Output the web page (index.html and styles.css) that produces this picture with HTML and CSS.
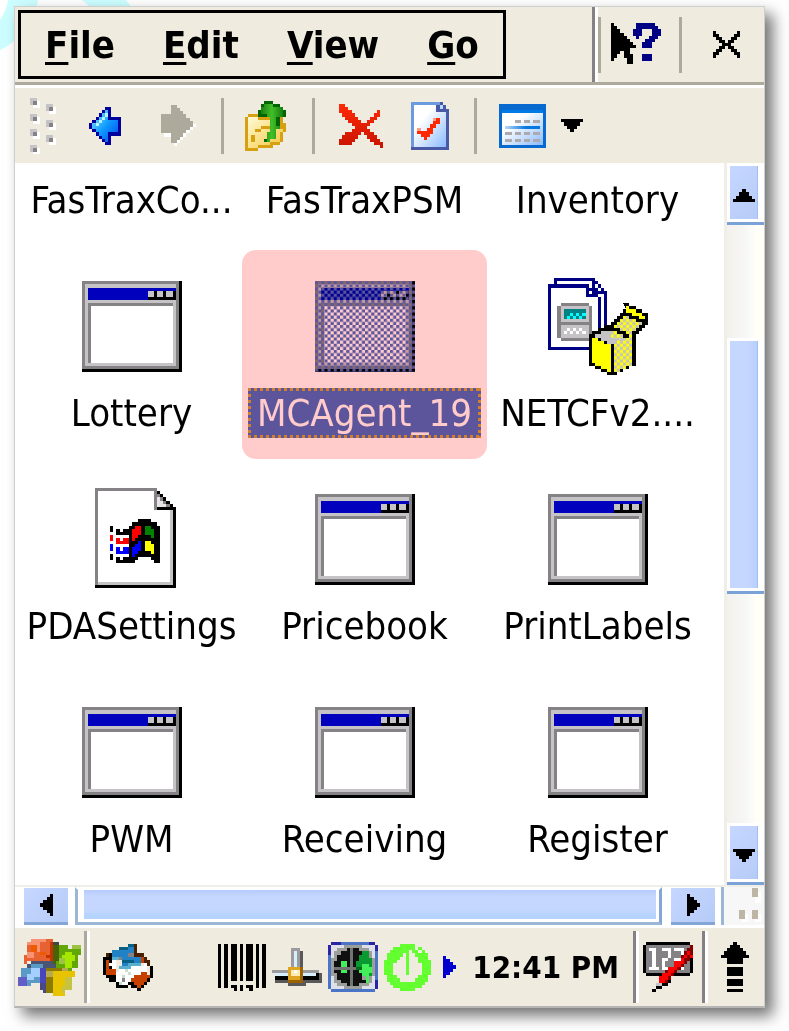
FILE: index.html
```
<!DOCTYPE html>
<html lang="en">
<head>
    <meta charset="UTF-8">
    <meta name="viewport" content="width=device-width, initial-scale=1.0">
    <title>File Explorer</title>
    <link rel="stylesheet" href="styles.css">
</head>
<body>
    <!-- shared icon drawings -->
    <svg class="defs" width="0" height="0" aria-hidden="true">
        <defs>
            <linearGradient id="folder-fill" x1="0" y1="0" x2="1" y2="1">
                <stop offset="0" stop-color="#fffbd8"/>
                <stop offset="1" stop-color="#f5c63c"/>
            </linearGradient>
            <linearGradient id="green-fill" x1="0" y1="0" x2="1" y2="0">
                <stop offset="0" stop-color="#0a6b0a"/>
                <stop offset=".5" stop-color="#42c028"/>
                <stop offset="1" stop-color="#0c6c0c"/>
            </linearGradient>
            <linearGradient id="blue-fill" x1="0" y1="0" x2="1" y2="1">
                <stop offset="0" stop-color="#8fe8ff"/>
                <stop offset=".5" stop-color="#109cff"/>
                <stop offset="1" stop-color="#0048f0"/>
            </linearGradient>
            <linearGradient id="page-fill" x1="0" y1="0" x2="1" y2="1">
                <stop offset=".3" stop-color="#ffffff"/>
                <stop offset="1" stop-color="#8cbcff"/>
            </linearGradient>
            <linearGradient id="red-fill" x1="0" y1="0" x2="0" y2="1">
                <stop offset="0" stop-color="#ff2a08"/>
                <stop offset="1" stop-color="#c81400"/>
            </linearGradient>
            <linearGradient id="line-fill" x1="0" y1="0" x2="1" y2="0">
                <stop offset="0" stop-color="#b4d8f8"/>
                <stop offset=".6" stop-color="#0878e0"/>
            </linearGradient>
            <pattern id="dither-blue" width="2" height="2" patternUnits="userSpaceOnUse">
                <path fill="#5c6bc3" d="M0 0h1v1H0zM1 1h1v1H1z"/>
            </pattern>
            <pattern id="dither-gray" width="2" height="2" patternUnits="userSpaceOnUse">
                <path fill="#c6c3c6" d="M0 0h1v1H0zM1 1h1v1H1z"/>
            </pattern>
            <symbol id="window" viewBox="0 0 32 32">
                <path fill="#000" d="M0 2h32v29H0z"/>
                <path fill="#848284" d="M0 2h31v28H0z"/>
                <path fill="#c6c3c6" d="M1 3h29v26H1z"/>
                <path fill="#0000bd" d="M2 4h28v4H2z"/>
                <path fill="#000" d="M21 5h9v3h-9z"/>
                <path fill="#c6c3c6" d="M21 5h2v2h-2zM24 5h2v2h-2zM27 5h2v2h-2z"/>
                <path fill="#848284" d="M2 9h27v1H3v18H2z"/>
                <path fill="#fff" d="M3 10h26v18H3z"/>
            </symbol>
        </defs>
    </svg>

    <svg class="backdrop" width="140" height="60" viewBox="0 0 140 60" aria-hidden="true">
        <path fill="#cdfeff" d="M8 0h30C36 16 22 40 0 50V20C4 14 7 7 8 0zM82 0h44l8 10H94z"/>
    </svg>

    <main class="device">
        <header class="menubar">
            <nav class="menus">
                <button><u>F</u>ile</button>
                <button><u>E</u>dit</button>
                <button><u>V</u>iew</button>
                <button><u>G</u>o</button>
            </nav>
            <div class="window-buttons">
                <span class="rule"></span>
                <button class="help" aria-label="Help">
                    <svg class="icon" width="50" height="50" viewBox="0 0 16 16">
                        <path fill="#000" d="M0 1h1v1h1v1h1v1h1v1h1v1h1v1h1v1h1v1H6v2h1v3H5v-2H4v-2H3v1H2v1H1v1H0z"/>
                        <path fill="#000084" d="M8 1h6v1h1v1h1v2h-1v1h-1v1h-1v2h-3V7h1V6h1V5h1V3h-3v2h-1v1H8V5H7V3h1zM10 11h3v2h-3z"/>
                    </svg>
                </button>
                <span class="rule"></span>
                <button class="close" aria-label="Close">
                    <svg class="icon" width="27" height="27" viewBox="0 0 9 9">
                        <path fill="#000" d="M0 0h1v1h1v1h1v1h1v1h1V3h1V2h1V1h1V0h1v2H8v1H7v1H6v1h1v1h1v1h1v2H8V8H7V7H6V6H5V5H4v1H3v1H2v1H1v1H0V7h1V6h1V5h1V4H2V3H1V2H0z"/>
                    </svg>
                </button>
            </div>
        </header>

        <section class="toolbar">
            <svg class="icon grip" width="26" height="56" viewBox="0 0 26 56">
                <path fill="#fff" d="M3 3h7v7H3zM3 19h7v7H3zM3 34h7v7H3zM3 50h7v6H3zM19 9h7v7h-7zM19 25h7v7h-7zM19 40h7v7h-7z"/>
                <path fill="#c6c3c6" d="M0 0h7v7H0zM0 16h7v7H0zM0 31h7v7H0zM0 47h7v7H0zM16 6h7v7h-7zM16 22h7v7h-7zM16 37h7v7h-7z"/>
                <path fill="#848284" d="M3 3h4v4H3zM3 19h4v4H3zM3 34h4v4H3zM3 50h4v4H3zM19 9h4v4h-4zM19 25h4v4h-4zM19 40h4v4h-4z"/>
            </svg>
            <button class="back" aria-label="Back">
                <svg class="icon" width="32" height="38" viewBox="0 0 10 12">
                    <path fill="#00009c" d="M5 0h2v3h3v6H7v3H5v-1H4v-1H3V9H2V8H1V7H0V5h1V4h1V3h1V2h1V1h1z"/>
                    <path fill="url(#blue-fill)" d="M5 1h1v3h3v4H6v3H5v-1H4V9H3V8H2V7H1V5h1V4h1V3h1V2h1z"/>
                    <path fill="#b5f3ff" d="M5 2h1v1H5v1H4v1H3v1H2V5h1V4h1V3h1z"/>
                </svg>
            </button>
            <button class="forward" aria-label="Forward" disabled>
                <svg class="icon" width="35" height="41" viewBox="0 0 11 13">
                    <path fill="#fff" d="M4 1h2v1h1v1h1v1h1v1h1v1h1v1h-1v1H9v1H8v1H7v1H6v1H5v1H4v-3H1V9h3z"/>
                    <path fill="#adaa9c" d="M3 0h2v1h1v1h1v1h1v1h1v1h1v2H9v1H8v1H7v1H6v1H5v1H3V9H0V3h3z"/>
                </svg>
            </button>
            <span class="rule"></span>
            <button class="up" aria-label="Up">
                <svg class="icon" width="41" height="50" viewBox="0 0 13 16">
                    <path fill="#d6a010" d="M0 5h1V4h3v1h8v2h1v3h-1v3h-1v1H9v1H4v1H0z"/>
                    <path fill="url(#folder-fill)" d="M1 5h3v1h5v2H5v1H3v2H2v4H1zM3 10h2V9h7v1h-1v3H8v1H4v1H2v-2h1z"/>
                    <path fill="url(#green-fill)" d="M6 0h3v1h2v1h1v1h1v2h-2v4h-1v3H8v1H6v-1h1v-2h1V5H4V3h1V1h1z"/>
                    <path fill="#006500" d="M6 0h3v1H6zM5 1h1v1H5zM4 3h1v2H4zM5 4h2v1H5zM12 3h1v2h-1zM10 5h1v3h-1zM6 12h1v1H6zM9 1h2v1H9z"/>
                </svg>
            </button>
            <span class="rule"></span>
            <button class="delete" aria-label="Delete">
                <svg class="icon" width="44" height="44" viewBox="0 0 14 14">
                    <path fill="url(#red-fill)" d="M0 0h2v1h1v1h1v1h1v1h1v1h1v1h2V5h1V4h1V3h1V2h1v2h-1v1h-1v1h-1v1H9v1h1v1h1v1h1v1h1v1h1v2h-1v-1h-2v-1h-1v-1H9v-1H8V9H7v1H6v1H5v1H4v1H0v-2h1v-1h1V9h2V8h1V7H4V6H3V5H2V4H1V3H0z"/>
                </svg>
            </button>
            <button class="properties" aria-label="Properties">
                <svg class="icon" width="38" height="48" viewBox="0 0 12 15">
                    <path fill="#4a59a5" d="M0 0h10v1h1v1h1v13H0z"/>
                    <path fill="#6b9ade" d="M0 0h9v1H1v13H0z"/>
                    <path fill="url(#page-fill)" d="M1 1h7v2h3v11H1z"/>
                    <path fill="#b5dbff" d="M9 1h1v1H9z"/>
                    <path fill="#ff2800" d="M8 5h1v2H8v1H7v2H6v1H5v1H4v-1H3v-1H2V8h1v1h2V8h1V7h1V6h1z"/>
                    <path fill="#ff9a84" d="M2 8h1v1H2zM7 5h1v1H7z"/>
                </svg>
            </button>
            <span class="rule"></span>
            <button class="view" aria-label="View">
                <svg class="icon" width="47" height="44" viewBox="0 0 15 14">
                    <path fill="#0869ce" d="M0 0h15v14H0z"/>
                    <path fill="#007be7" d="M1 2h13v1H1z"/>
                    <path fill="url(#page-fill)" d="M1 3h13v10H1z"/>
                    <path fill="#adaaad" d="M5 5h2v1H5zM8 5h2v1H8zM11 5h2v1h-2zM2 9h2v1H2zM5 9h2v1H5zM8 9h2v1H8zM11 9h2v1h-2zM2 11h2v1H2zM5 11h2v1H5zM8 11h2v1H8zM11 11h2v1h-2z"/>
                    <path fill="url(#line-fill)" d="M2 7h11v1H2z"/>
                </svg>
                <svg class="icon" width="22" height="13" viewBox="0 0 7 4">
                    <path fill="#000" d="M0 0h7v1H6v1H5v1H4v1H3V3H2V2H1V1H0z"/>
                </svg>
            </button>
        </section>

        <section class="view-area">
            <ul class="files">
                <li class="file"><span>FasTraxCo...</span></li>
                <li class="file"><span>FasTraxPSM</span></li>
                <li class="file"><span>Inventory</span></li>
                <li class="file">
                    <svg class="icon" width="100" height="100"><use href="#window"/></svg>
                    <span>Lottery</span>
                </li>
                <li class="file selected">
                    <svg class="icon" width="100" height="100" viewBox="0 0 32 32">
                        <use href="#window"/>
                        <path fill="url(#dither-blue)" d="M0 2h32v29H0z"/>
                    </svg>
                    <span>MCAgent_19</span>
                </li>
                <li class="file">
                    <svg class="icon" width="100" height="100" viewBox="0 0 32 32">
                        <path fill="#000084" d="M2 1h13v1h1v1h1v1h1v1h1v14H2z"/>
                        <path fill="#fff" d="M3 2h11v3h1v1h3v12H3zM15 3h1v1h-1zM16 4h1v1h-1z"/>
                        <path fill="#000084" d="M0 3h13v1h1v1h1v1h1v1h1v17H0z"/>
                        <path fill="#fff" d="M1 4h11v3h4v16H1zM13 5h1v1h-1z"/>
                        <path fill="#848284" d="M4 9h9v1h1v10h-1v1H4v-1H3V10h1z"/>
                        <path fill="#c6c3c6" d="M4 10h9v5H4zM4 16h9v4H4z"/>
                        <path fill="#008284" d="M5 11h7v3H5z"/>
                        <path fill="#0ff" d="M7 12h1v1H7zM9 12h1v1H9zM11 12h1v1h-1zM6 13h1v1H6zM8 13h1v1H8zM10 13h1v1h-1z"/>
                        <path fill="#fff" d="M6 17h1v1H6zM8 17h1v1H8zM10 17h1v1h-1zM5 18h1v1H5zM7 18h1v1H7zM9 18h1v1H9zM11 18h1v1h-1z"/>
                        <path fill="#000" d="M24 9h2v1h2v1h2v1h2v4h-1v1h-1v1h-1v1h-1v10h-2v1h-2v1h-2v1h-3v-1h-2v-1h-2v-1h-2V19h1v-1h2v-1h2v-1h2v-1h1v-1h1v-1h1v-1h1v-1h1z"/>
                        <path fill="#ff0" d="M14 20h2v1h2v1h2v9h-1v-1h-2v-1h-2v-1h-1zM25 10h1v1h2v1h2v1h1v1h-2v-1h-2v-1h-2z"/>
                        <path fill="#c6c3c6" d="M15 19h2v-1h3v1h2v1h2v1h-2v1h-3v-1h-2v-1h-2z"/>
                        <path fill="#ff0" d="M21 22h1v-1h2v-1h2v-1h1v10h-2v1h-2v1h-2zM21 16h1v-1h1v-1h1v-1h2v1h2v1h2v1h-1v1h-1v1h-1v1h-2v-1h-2v-1h-2zM20 18h2v1h2v1h-1v1h-1v-1h-2z"/>
                        <path fill="url(#dither-gray)" d="M21 22h1v-1h2v-1h2v-1h1v10h-2v1h-2v1h-2zM21 16h1v-1h1v-1h1v-1h2v1h2v1h2v1h-1v1h-1v1h-1v1h-2v-1h-2v-1h-2zM20 18h2v1h2v1h-1v1h-1v-1h-2z"/>
                    </svg>
                    <span>NETCFv2....</span>
                </li>
                <li class="file">
                    <svg class="icon" width="100" height="100" viewBox="0 0 32 32">
                        <path fill="#000" d="M4 0h20v1h1v1h1v1h1v1h1v1h1v1h1v26H4z"/>
                        <path fill="#848284" d="M4 0h20v7h-1V1H5v30H4z"/>
                        <path fill="#fff" d="M5 1h18v6h5v23H5z"/>
                        <path fill="#c6c3c6" d="M5 30h23V7h1v24H5z"/>
                        <path fill="#848284" d="M23 1h1v6h-1zM24 2h1v1h-1zM25 3h1v1h-1zM26 4h1v1h-1zM27 5h1v1h-1z"/>
                        <path fill="#e7e3e7" d="M24 3h1v1h1v1h1v1h-3z"/>
                        <path fill="#000" d="M9 12h1v2H9zM9 21h1v2H9zM11 13h1v1h1v-1h2v2h-4zM11 22h1v1h1v-1h3v2h-5z"/>
                        <path fill="red" d="M9 15h1v2H9zM11 16h1v1h1v-1h2v2h-4z"/>
                        <path fill="#00f" d="M9 18h1v2H9zM11 19h1v1h1v-1h2v2h-4z"/>
                        <path fill="#000" d="M18 10h4v1h2v1h1v12h-2v-1h-1v-1h-4v1h-1v1h-2V12h1v-1h2z"/>
                        <path fill="red" d="M17 12h2v3h-1v1h-1v1h-1v-4h1z"/>
                        <path fill="#008200" d="M20 12h2v1h1v3h-1v-1h-2z"/>
                        <path fill="#00f" d="M17 18h1v-1h1v3h-1v1h-1v1h-1v-3h1z"/>
                        <path fill="#ff0" d="M20 17h2v1h1v3h-1v-1h-2z"/>
                    </svg>
                    <span>PDASettings</span>
                </li>
                <li class="file">
                    <svg class="icon" width="100" height="100"><use href="#window"/></svg>
                    <span>Pricebook</span>
                </li>
                <li class="file">
                    <svg class="icon" width="100" height="100"><use href="#window"/></svg>
                    <span>PrintLabels</span>
                </li>
                <li class="file">
                    <svg class="icon" width="100" height="100"><use href="#window"/></svg>
                    <span>PWM</span>
                </li>
                <li class="file">
                    <svg class="icon" width="100" height="100"><use href="#window"/></svg>
                    <span>Receiving</span>
                </li>
                <li class="file">
                    <svg class="icon" width="100" height="100"><use href="#window"/></svg>
                    <span>Register</span>
                </li>
            </ul>
            <div class="scroll-y">
                <button class="scroll-button" aria-label="Scroll up">
                    <svg class="icon" width="22" height="13" viewBox="0 0 7 4">
                        <path fill="#000" d="M3 0h1v1h1v1h1v1h1v1H0V3h1V2h1V1h1z"/>
                    </svg>
                </button>
                <div class="space-before"></div>
                <div class="thumb"></div>
                <div class="space-after"></div>
                <button class="scroll-button" aria-label="Scroll down">
                    <svg class="icon" width="22" height="13" viewBox="0 0 7 4">
                        <path fill="#000" d="M0 0h7v1H6v1H5v1H4v1H3V3H2V2H1V1H0z"/>
                    </svg>
                </button>
            </div>
        </section>

        <div class="scroll-x">
            <button class="scroll-button" aria-label="Scroll left">
                <svg class="icon" width="13" height="22" viewBox="0 0 4 7">
                    <path fill="#000" d="M4 0v7H3V6H2V5H1V4H0V3h1V2h1V1h1V0z"/>
                </svg>
            </button>
            <div class="thumb"></div>
            <button class="scroll-button" aria-label="Scroll right">
                <svg class="icon" width="13" height="22" viewBox="0 0 4 7">
                    <path fill="#000" d="M0 0v7h1V6h1V5h1V4h1V3H3V2H2V1H1V0z"/>
                </svg>
            </button>
            <div class="corner">
                <svg class="icon" width="22" height="34" viewBox="0 0 22 34">
                    <path fill="#fff" d="M16 4h6v11h-6zM3 26h6v8H3zM16 26h6v8h-6z"/>
                    <path fill="#bdb6a5" d="M13 0h6v9h-6zM0 22h6v9H0zM13 22h6v9h-6z"/>
                </svg>
            </div>
        </div>

        <footer class="taskbar">
            <button class="start" aria-label="Start">
                <svg class="icon" width="63" height="57" viewBox="0 0 20 18">
                    <path fill="#e76131" d="M4 0h7v7H9V6H5v1H3v1H2V5h1V1h1z"/>
                    <path fill="#f79273" d="M4 0h5v1H7v3H5V2H3V1h1zM3 4h2v2H3z"/>
                    <path fill="#ef5900" d="M4 2h2v2H4zM7 4h2v2H7z"/>
                    <path fill="#e76131" d="M5 5h4v2H5z"/>
                    <path fill="#c63400" d="M10 1h1v6h-1zM9 5h1v1H9z"/>
                    <path fill="#424542" d="M11 1h2v1h-2z"/>
                    <path fill="#4a5573" d="M4 7h7v1h1v1H3V8h1z"/>
                    <path fill="#4a6108" d="M11 2h2v6h-2z"/>
                    <path fill="#63a608" d="M13 2h3v1h1V2h3v3h-1v4h-2v1h-5V7h1z"/>
                    <path fill="#a5e700" d="M15 4h2v1h1v2h-1v2h-2V7h-1V5h1z"/>
                    <path fill="#9cc342" d="M17 2h3v1h-3zM13 6h2v2h-2z"/>
                    <path fill="#5a9ac6" d="M1 9h3V8h4v6H4v1H1v-3z"/>
                    <path fill="#a5cfff" d="M4 9h3v3H5v1H3v-2h1z"/>
                    <path fill="#635dc6" d="M0 12h3v3H0z"/>
                    <path fill="#4a45bd" d="M7 9h2v5H7z"/>
                    <path fill="#4a4984" d="M7 14h2v3H8v-1H7z"/>
                    <path fill="#8c7900" d="M9 9h5v1h-3v7H9z"/>
                    <path fill="#e7c300" d="M11 10h7v2h-1v4h-2v2h-4z"/>
                    <path fill="#c6c342" d="M15 12h2v4h-2v1h-1v-2h1z"/>
                    <path fill="#b5aa52" d="M9 10h2v2H9zM14 9h2v1h-2z"/>
                </svg>
            </button>
            <span class="groove tan"></span>
            <button class="sync" aria-label="Synchronize">
                <svg class="icon" width="50" height="47" viewBox="0 0 16 15">
                    <path fill="#000" d="M1 3h2v5h1v4H2v-1H1v-1H0V4h1zM4 10h1v4H4zM5 13h3v1H5zM8 12h2v1h1v1h2v-1h1v-1h1v-1h1V7h-1v4h-1v1h-1v1h-1v2h-1v-1H9v-1H8z"/>
                    <path fill="#c64100" d="M1 5h1v5H1zM2 8h2v2H2zM12 4h2v1h1v2h-1v3h1v1h-1v1h-1v1h-1v1h-1v-1h-1v-1H9v-1h1v-1h1V9h2V6h-1z"/>
                    <path fill="#fff" d="M5 7h8v2h-1v1h-2v1H9v1H8v1H5v-1H4V9h1zM13 5h1v4h-1zM3 4h1v4H3zM2 6h1v1H2z"/>
                    <path fill="#2182c6" d="M3 2h3V1h2V0h3v4h1v3H6V5H3z"/>
                    <path fill="#086184" d="M5 1h3v1H5zM8 0h2v1H8zM6 5h4v1H6z"/>
                    <path fill="#5aaece" d="M8 6h4v1H9v1H5V7h3zM3 4h2v1H3z"/>
                    <path fill="#c6dfce" d="M7 8h1v1H7zM8 9h1v1H8zM6 10h1v1H6zM5 12h1v1H5z"/>
                    <path fill="#4a2000" d="M10 0h1v3h2v1h1v1h1v2h-1V6h-1V4h-3zM1 3h1v1H1z"/>
                    <path fill="#848284" d="M5 4h1v1H5zM8 3h2v1H8zM6 11h1v1H6z"/>
                </svg>
            </button>
            <div class="tray">
                <svg class="icon barcode" width="48" height="47" viewBox="0 0 48 47">
                    <path fill="#000" d="M0 0h3v44H0zM6 0h4v44H6zM13 0h6v37h-6zM22 0h3v37h-3zM28 0h7v37h-7zM38 0h3v44h-3zM44 0h4v44h-4zM13 41h6v6h-3v-3h-3zM22 41h3v6h-3zM28 41h7v6h-4v-3h-3z"/>
                </svg>
                <svg class="icon network" width="50" height="38" viewBox="0 0 16 12">
                    <path fill="#5a595a" d="M8 1h2v6h5v1h1v3h-5v1H5v-1H1v-1h7z"/>
                    <path fill="#9c9a9c" d="M6 0h3v7h6v1H0V7h6z"/>
                    <path fill="#d6efff" d="M7 1h1v5H7zM1 8h13v1H1z"/>
                    <path fill="#000" d="M14 8h1v1h-1zM1 9h14v1H1z"/>
                    <path fill="#9c6100" d="M5 6h5v5H5z"/>
                    <path fill="#dea620" d="M5 6h4v4H5z"/>
                    <path fill="#ffebb5" d="M6 7h3v2H6z"/>
                    <path fill="#fff" d="M7 7h1v1H7z"/>
                </svg>
                <svg class="icon radar" width="50" height="50" viewBox="0 0 16 16">
                    <path fill="#4a75c6" d="M1 0h14v1h1v14h-1v1H1v-1H0V1h1z"/>
                    <path fill="#2924a5" d="M1 0h3v1H1zM0 1h1v3H0zM13 0h2v1h-2zM15 1h1v2h-1zM15 12h1v3h-1z"/>
                    <path fill="#dedfe7" d="M1 1h14v14H1z"/>
                    <path fill="#9c9e9c" d="M5 1h6v1h2v1h1v2h1v6h-1v2h-1v1h-2v1H5v-1H3v-1H2v-2H1V5h1V3h1V2h2z"/>
                    <path fill="#101010" d="M6 2h4v1h2v2h-1v1h-1v4h1v2h1v1h-2v1H6v-1H4v-1H3v-2H2V6h1V4h1V3h2z"/>
                    <path fill="#089a31" d="M10 4h1V3h2v2h1v6h-1v2h-1v-2h-1v-1h-1V9H8V8h1V6h1z"/>
                    <path fill="#42ef5a" d="M4 6h2v4H4zM11 7h2v1h1v2h-1v3h-1v-2h-1v-1h-1V9h1z"/>
                    <path fill="#737573" d="M7 2h1v12H7zM2 8h8v1H2z"/>
                    <path fill="#00691a" d="M9 8h2v1H9z"/>
                </svg>
                <svg class="icon power" width="47" height="47" viewBox="0 0 15 15">
                    <path fill="#63ff31" fill-rule="evenodd" d="M5 0h5v1h2v1h1v1h1v2h1v5h-1v2h-1v1h-1v1h-2v1H5v-1H3v-1H2v-1H1v-2H0V5h1V3h1V2h1V1h2zM6 3v1H5v1H4v1H3v4h1v1h1v1h5v-1h1v-1h1V6h-1V4H9V3z"/>
                    <path fill="#63ff31" d="M7 3h1v7H7z"/>
                    <path fill="#efebde" d="M8 2h1v1h1v1H9V3H8zM10 1h1v1h-1zM11 2h1v1h-1z"/>
                </svg>
                <svg class="icon more" width="13" height="22" viewBox="0 0 4 7">
                    <path fill="#0000ce" d="M0 0h1v1h1v1h1v1h1v1H3v1H2v1H1v1H0z"/>
                </svg>
                <time class="clock">12:41 PM</time>
            </div>
            <span class="groove"></span>
            <button class="keyboard" aria-label="Input panel">
                <svg class="icon" width="50" height="50" viewBox="0 0 16 16">
                    <path fill="#000" d="M1 0h14v1h1v9h-1v1H1v-1H0V1h1z"/>
                    <path fill="#848284" d="M1 1h14v9H1z"/>
                    <path fill="#fff" d="M2 2h2v6h1v1H2V8h1V3H2zM6 2h3v3H8v1H7v2h2v1H6V5h2V3H6zM10 2h3v7h-3V8h2V6h-2V5h2V3h-2z"/>
                    <path fill="#840000" d="M15 1h1v3h-1v2h-1v1h-1v1h-1v1h-1v1h-1v1H9v2H7v1H6v-1h1v-1H5v-1h1v-1h1V9h2V8h1V6h2V4h1V3h1V2h1z"/>
                    <path fill="red" d="M14 3h1v1h-1v1h-1v2h-1v1h-1v1h-1v1H9v1H8v1H7v1H5v-2h1v-1h2V8h2V6h2V5h1V4h1zM15 4h1v1h-1z"/>
                    <path fill="#c6c3c6" d="M4 13h2v1H4z"/>
                    <path fill="#000" d="M3 15h1v1H3zM4 14h2v1H4zM6 13h2v1H6zM8 12h1v1H8z"/>
                </svg>
            </button>
            <span class="groove"></span>
            <button class="desktop" aria-label="Switch window">
                <svg class="icon" width="28" height="50" viewBox="0 0 9 16">
                    <path fill="#000" d="M4 0h1v1h1v1h1v1h1v1h1v1H7v2H2V5H0V4h1V3h1V2h1V1h1zM2 8h5v3H2zM2 12h5v2H2zM2 15h5v1H2z"/>
                </svg>
            </button>
        </footer>
    </main>
</body>
</html>
```
FILE: styles.css
```
* {
    box-sizing: border-box;
}
body {
    margin: 0;
    background: white;
    color: black;
    font-family: "DejaVu Sans Condensed", "DejaVu Sans", sans-serif;
    font-size: 38px;
    line-height: 50px;
}
button {
    margin: 0;
    padding: 0;
    border: 0;
    background: none;
    color: inherit;
    font: inherit;
    cursor: pointer;
}
.defs,
.backdrop {
    position: absolute;
    top: 0;
    left: 0;
}
.icon {
    display: block;
    flex: none;
    shape-rendering: crispEdges;
}

/* device frame */
.device {
    position: relative;
    margin: 6px 24px 22px 14px;
    border: 1px solid #ced0d0;
    border-bottom: 2px solid #b5b5b5;
    background: #efebde;
    box-shadow: 8px 8px 14px rgba(0, 0, 0, 0.55);
}
.rule {
    width: 3px;
    height: 56px;
    background: #adaa9c;
}

/* menu bar */
.menubar {
    display: flex;
    border-bottom: 3px solid #adaa9c;
}
.menus {
    display: flex;
    gap: 48px;
    margin: 3px;
    padding: 0 24px;
    border: 3px solid black;
    font-weight: bold;
}
.menus button {
    height: 63px;
}
.menus u {
    text-decoration-thickness: 3px;
    text-underline-offset: 4px;
    text-decoration-skip-ink: none;
}
.window-buttons {
    display: flex;
    align-items: center;
    margin-left: auto;
    border-left: 3px solid #848284;
    box-shadow: inset 3px 0 white;
    padding: 0 24px 0 3px;
}
.window-buttons .help {
    padding: 0 18px 0 10px;
}
.window-buttons .close {
    padding-left: 31px;
}

/* toolbar */
.toolbar {
    display: flex;
    align-items: center;
    height: 78px;
    padding-left: 15px;
    border-top: 3px solid white;
}
.toolbar button {
    display: flex;
    align-items: center;
}
.back {
    margin-left: 33px;
}
.forward {
    margin: 0 25px 0 40px;
}
.up {
    margin: 0 26px 0 21px;
}
.delete {
    margin: 0 28px 0 24px;
}
.properties {
    margin-right: 25px;
}
.view {
    gap: 15px;
    margin-left: 22px;
}

/* file list */
.view-area {
    display: flex;
    background: white;
}
.files {
    flex: 1;
    display: grid;
    grid-template-columns: repeat(3, minmax(0, 1fr));
    gap: 50px 0;
    margin: 0;
    padding: 12px 10px 21px 0;
    list-style: none;
}
.file {
    position: relative;
    display: flex;
    flex-direction: column;
    align-items: center;
    gap: 13px;
    white-space: nowrap;
}
.file.selected span {
    padding: 0 9px;
    color: white;
    background:
        repeating-linear-gradient(90deg, #d09f36 0 3px, transparent 3px 6px) top / 100% 3px no-repeat,
        repeating-linear-gradient(90deg, #d09f36 0 3px, transparent 3px 6px) bottom / 100% 3px no-repeat,
        repeating-linear-gradient(#d09f36 0 3px, transparent 3px 6px) left / 3px 100% no-repeat,
        repeating-linear-gradient(#d09f36 0 3px, transparent 3px 6px) right / 3px 100% no-repeat,
        #5c6bc3;
}
.file.selected::after {
    content: "";
    position: absolute;
    inset: -25px -6px -21px;
    border-radius: 14px;
    background: #ffcbcb;
    mix-blend-mode: multiply;
}

/* scroll bars */
.scroll-button {
    display: flex;
    align-items: center;
    justify-content: center;
    background: linear-gradient(135deg, #c6d7ff, #b5cbf7);
}
.scroll-y {
    display: flex;
    flex-direction: column;
    width: 40px;
    border-left: 3px solid #efefe7;
    background: linear-gradient(90deg, #f3f1ec, #f7f7f7 50%, #fffff7 80%);
}
.scroll-y .scroll-button,
.scroll-y .thumb {
    border: solid white;
    border-width: 3px 6px 3px 3px;
    box-shadow: 0 3px #7ba2d6, inset -1px 0 #a5bef0;
}
.scroll-y .scroll-button {
    height: 59px;
    margin-bottom: 3px;
    padding-top: 6px;
}
.scroll-y .thumb {
    flex: 250;
    background: linear-gradient(90deg, #c6d7ff 60%, #b5cffb);
}
.scroll-y .space-before {
    flex: 114;
}
.scroll-y .space-after {
    flex: 234;
}
.scroll-x {
    display: flex;
    height: 43px;
    border-top: 2px solid #efefe7;
    border-bottom: 3px solid white;
    background: white;
}
.scroll-x .scroll-button {
    width: 44px;
    margin: 1px 0 0 9px;
    border-bottom: 3px solid #84a6d6;
}
.scroll-x .thumb {
    flex: 1;
    margin-left: 7px;
    border: 3px solid;
    border-color: white #84a6d6 #9cb6d6 #9cb6d6;
    background: linear-gradient(#b5cbff, #c6d7ff 20%, #c6d7ff 60%, #b5d3ff 80%);
    box-shadow: inset 6px 0 white, inset -3px -3px white;
}
.scroll-x .corner {
    width: 43px;
    margin-left: 6px;
    padding: 1px 0 0 15px;
    border-left: 3px solid #9cb6d6;
    background: #f7f7f7;
}

/* taskbar */
.taskbar {
    display: flex;
    align-items: center;
    height: 78px;
}
.groove {
    width: 6px;
    height: 72px;
    border-left: 3px solid #848284;
    border-right: 3px solid white;
}
.groove.tan {
    border-left-color: #adaa9c;
}
.start {
    padding: 0 3px;
}
.sync {
    padding-left: 13px;
}
.tray {
    display: flex;
    align-items: center;
    gap: 6px;
    margin: 0 14px 0 auto;
}
.more {
    margin: 0 10px 0 6px;
}
.clock {
    font-size: 31px;
    font-weight: bold;
}
.keyboard {
    padding: 0 9px 0 4px;
}
.desktop {
    padding: 0 15px 0 13px;
}
```
